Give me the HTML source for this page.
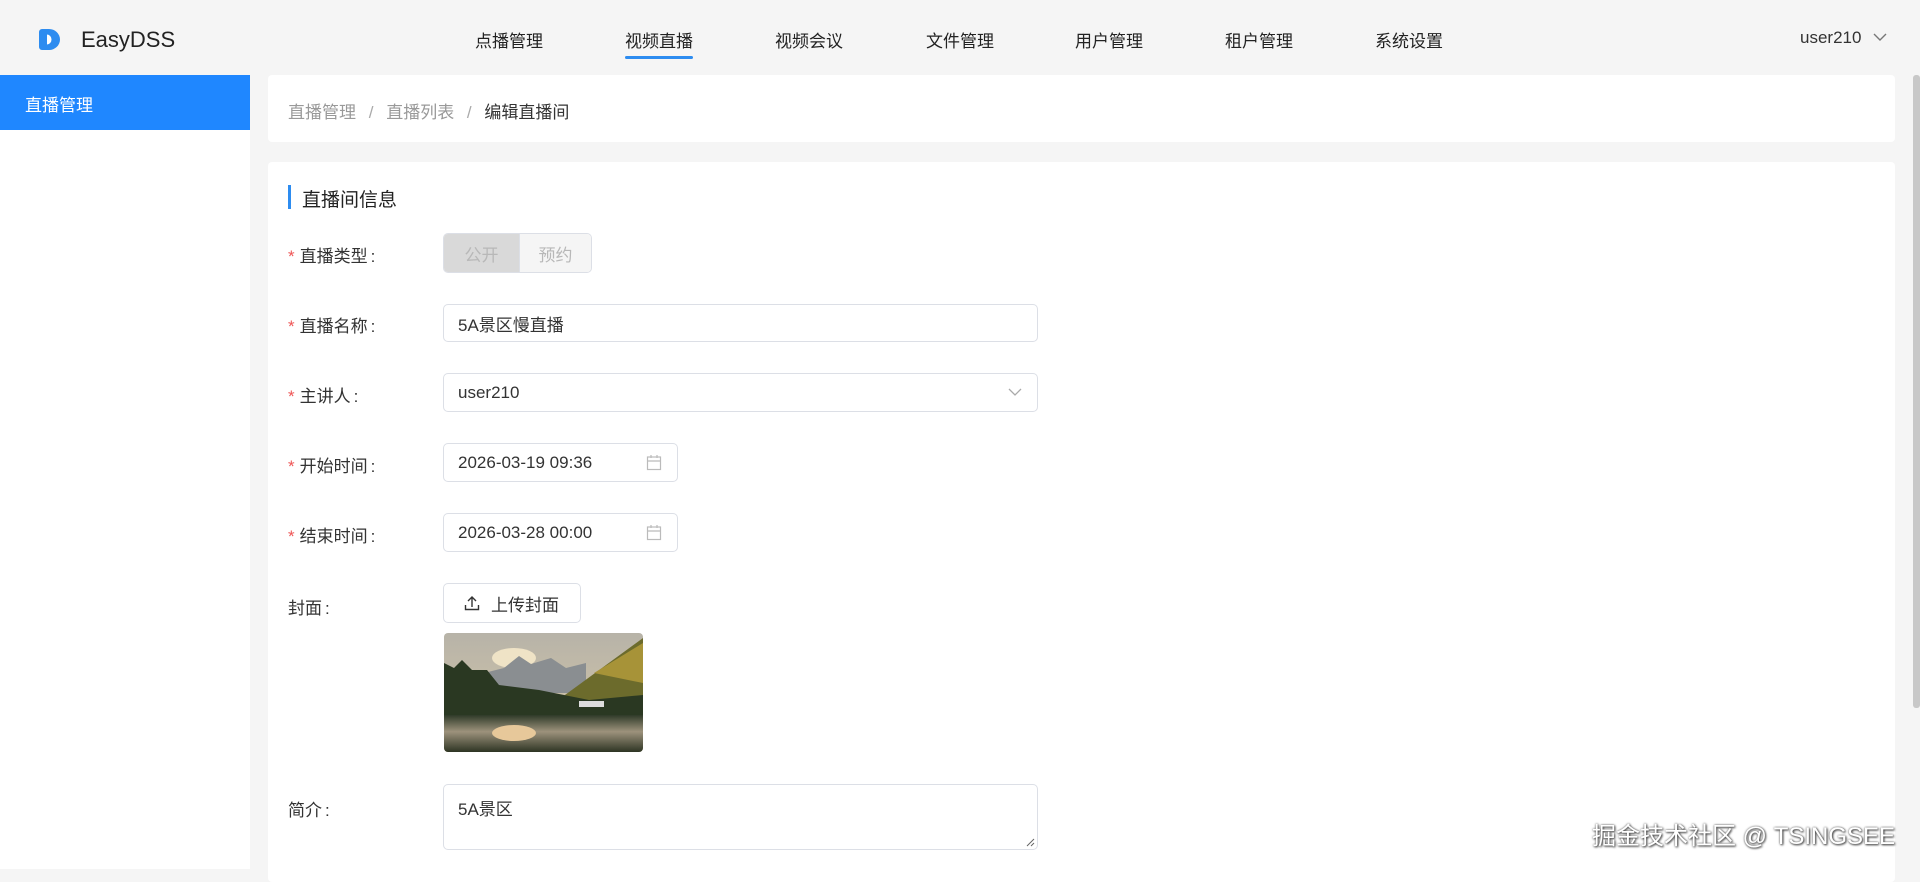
<!DOCTYPE html>
<html><head><meta charset="utf-8"><style>
*{box-sizing:border-box;margin:0;padding:0}
body{width:1920px;height:869px;overflow:hidden;background:#f5f5f5;font-family:"Liberation Sans","Noto Sans CJK SC",sans-serif;color:#333;position:relative}
.abs{position:absolute}
.nav{top:27px;font-size:17px;color:#222;transform:translateX(-50%)}
.card{background:#fff;border-radius:4px}
.lbl{left:288px;font-size:17px;color:#333}
.lbl i{color:#e55;font-style:normal;margin-right:5px}
.lbl b{font-weight:normal;margin-left:3px}
.inp{border:1px solid #dcdfe6;border-radius:5px;background:#fff;font-size:17px;color:#333;padding-left:14px;display:flex;align-items:center}
</style></head><body>
<!-- header -->
<svg class="abs" style="left:37px;top:27px" width="26" height="25" viewBox="0 0 26 25"><path d="M5 2h7a11 10.5 0 0 1 0 21H5a3 3 0 0 1-3-3V5a3 3 0 0 1 3-3z" fill="#2d8cf0"/><path d="M10 7.5a4.5 5 0 1 1 0 10z" fill="#fff"/></svg>
<div class="abs" style="left:81px;top:27px;font-size:22px;color:#222">EasyDSS</div>
<div class="abs nav" style="left:509px">点播管理</div>
<div class="abs nav" style="left:659px">视频直播</div>
<div class="abs" style="left:625px;top:56px;width:68px;height:3px;background:#2d8cf0;border-radius:2px"></div>
<div class="abs nav" style="left:809px">视频会议</div>
<div class="abs nav" style="left:960px">文件管理</div>
<div class="abs nav" style="left:1109px">用户管理</div>
<div class="abs nav" style="left:1259px">租户管理</div>
<div class="abs nav" style="left:1409px">系统设置</div>
<div class="abs" style="left:1800px;top:28px;font-size:17px;color:#333">user210</div>
<svg class="abs" style="left:1873px;top:33px" width="14" height="9"><path d="M1 1l6 6 6-6" stroke="#777" stroke-width="1.4" fill="none"/></svg>
<!-- sidebar -->
<div class="abs" style="left:0;top:75px;width:250px;height:794px;background:#fff"></div>
<div class="abs" style="left:0;top:75px;width:250px;height:55px;background:#1f87ff;color:#fff;font-size:17px;padding:16px 0 0 25px">直播管理</div>
<!-- breadcrumb -->
<div class="abs card" style="left:268px;top:75px;width:1627px;height:67px"></div>
<div class="abs" style="left:288px;top:98px;font-size:17px;color:#999">直播管理 <span style="margin:0 8px;color:#aaa">/</span> 直播列表 <span style="margin:0 8px;color:#aaa">/</span> <span style="color:#333">编辑直播间</span></div>
<!-- main card -->
<div class="abs card" style="left:268px;top:162px;width:1627px;height:720px"></div>
<div class="abs" style="left:288px;top:185px;width:3px;height:24px;background:#2d8cf0"></div>
<div class="abs" style="left:302px;top:185px;font-size:19px;color:#222">直播间信息</div>

<div class="abs lbl" style="top:242px"><i>*</i>直播类型<b>:</b></div>
<div class="abs" style="left:443px;top:233px;width:149px;height:40px;border:1px solid #dcdfe6;border-radius:5px;overflow:hidden;display:flex;font-size:17px;color:#b8b8b8">
<div style="width:75px;background:#d9d9d9;display:flex;align-items:center;justify-content:center">公开</div>
<div style="flex:1;background:#f5f5f5;display:flex;align-items:center;justify-content:center;border-left:1px solid #dcdfe6">预约</div></div>

<div class="abs lbl" style="top:312px"><i>*</i>直播名称<b>:</b></div>
<div class="abs inp" style="left:443px;top:304px;width:595px;height:38px">5A景区慢直播</div>

<div class="abs lbl" style="top:382px"><i>*</i>主讲人<b>:</b></div>
<div class="abs inp" style="left:443px;top:373px;width:595px;height:39px">user210</div>
<svg class="abs" style="left:1008px;top:388px" width="14" height="9"><path d="M1 1l6 6 6-6" stroke="#aaa" stroke-width="1.3" fill="none"/></svg>

<div class="abs lbl" style="top:452px"><i>*</i>开始时间<b>:</b></div>
<div class="abs inp" style="left:443px;top:443px;width:235px;height:39px">2026-03-19 09:36</div>
<svg class="abs" style="left:646px;top:454px" width="16" height="17"><rect x="1.5" y="3" width="13" height="12.5" fill="none" stroke="#bbb" stroke-width="1.2"/><path d="M1.5 7h13M5 1v3M11 1v3" stroke="#bbb" stroke-width="1.2"/></svg>

<div class="abs lbl" style="top:522px"><i>*</i>结束时间<b>:</b></div>
<div class="abs inp" style="left:443px;top:513px;width:235px;height:39px">2026-03-28 00:00</div>
<svg class="abs" style="left:646px;top:524px" width="16" height="17"><rect x="1.5" y="3" width="13" height="12.5" fill="none" stroke="#bbb" stroke-width="1.2"/><path d="M1.5 7h13M5 1v3M11 1v3" stroke="#bbb" stroke-width="1.2"/></svg>

<div class="abs lbl" style="top:594px">封面<b>:</b></div>
<div class="abs inp" style="left:443px;top:583px;width:138px;height:40px;padding-left:20px"><svg width="16" height="16" style="margin-right:11px"><path d="M8 12V2M4 6l4-4 4 4M1.5 10v4.5h13V10" stroke="#333" stroke-width="1.4" fill="none"/></svg>上传封面</div>
<svg class="abs" style="left:444px;top:633px;border-radius:4px" width="199" height="119" viewBox="0 0 199 119">
<defs><linearGradient id="sk" x1="0" y1="0" x2="0" y2="1"><stop offset="0" stop-color="#b7b3a8"/><stop offset="1" stop-color="#d8c9a8"/></linearGradient>
<linearGradient id="wt" x1="0" y1="0" x2="0" y2="1"><stop offset="0" stop-color="#2f3a28"/><stop offset=".45" stop-color="#9d927c"/><stop offset="1" stop-color="#2e3524"/></linearGradient></defs>
<rect width="199" height="119" fill="url(#sk)"/>
<ellipse cx="70" cy="25" rx="22" ry="10" fill="#efe3c6"/>
<path d="M20 45l40-10 15-12 12 8 20-6 15 10 20-5 0 30H20z" fill="#8a8e91"/>
<path d="M110 70L199 5v75H110z" fill="#6c6b2c"/>
<path d="M150 40l49-30v40z" fill="#a79338"/>
<path d="M0 30l10 5 8-8 10 10 15 0 12 15 40 5 50 10 54-5v28H0z" fill="#2a3822"/>
<rect y="82" width="199" height="37" fill="url(#wt)"/>
<ellipse cx="70" cy="100" rx="22" ry="8" fill="#e7c89a"/>
<rect x="135" y="68" width="25" height="6" fill="#ddd"/>
</svg>

<div class="abs lbl" style="top:796px">简介<b>:</b></div>
<div class="abs inp" style="left:443px;top:784px;width:595px;height:66px;align-items:flex-start;padding-top:10px">5A景区</div>
<svg class="abs" style="left:1026px;top:838px" width="9" height="9"><path d="M8 1L1 8M8 5L5 8" stroke="#666" stroke-width="1"/></svg>

<!-- scrollbar -->
<div class="abs" style="left:1913px;top:75px;width:7px;height:633px;background:#c8c8c8;border-radius:3px"></div>
<div class="abs" style="left:1592px;top:816px;font-size:24px;color:#fff;text-shadow:0 0 2px #555,1px 1px 2px #333">掘金技术社区 @ TSINGSEE</div>
</body></html>
